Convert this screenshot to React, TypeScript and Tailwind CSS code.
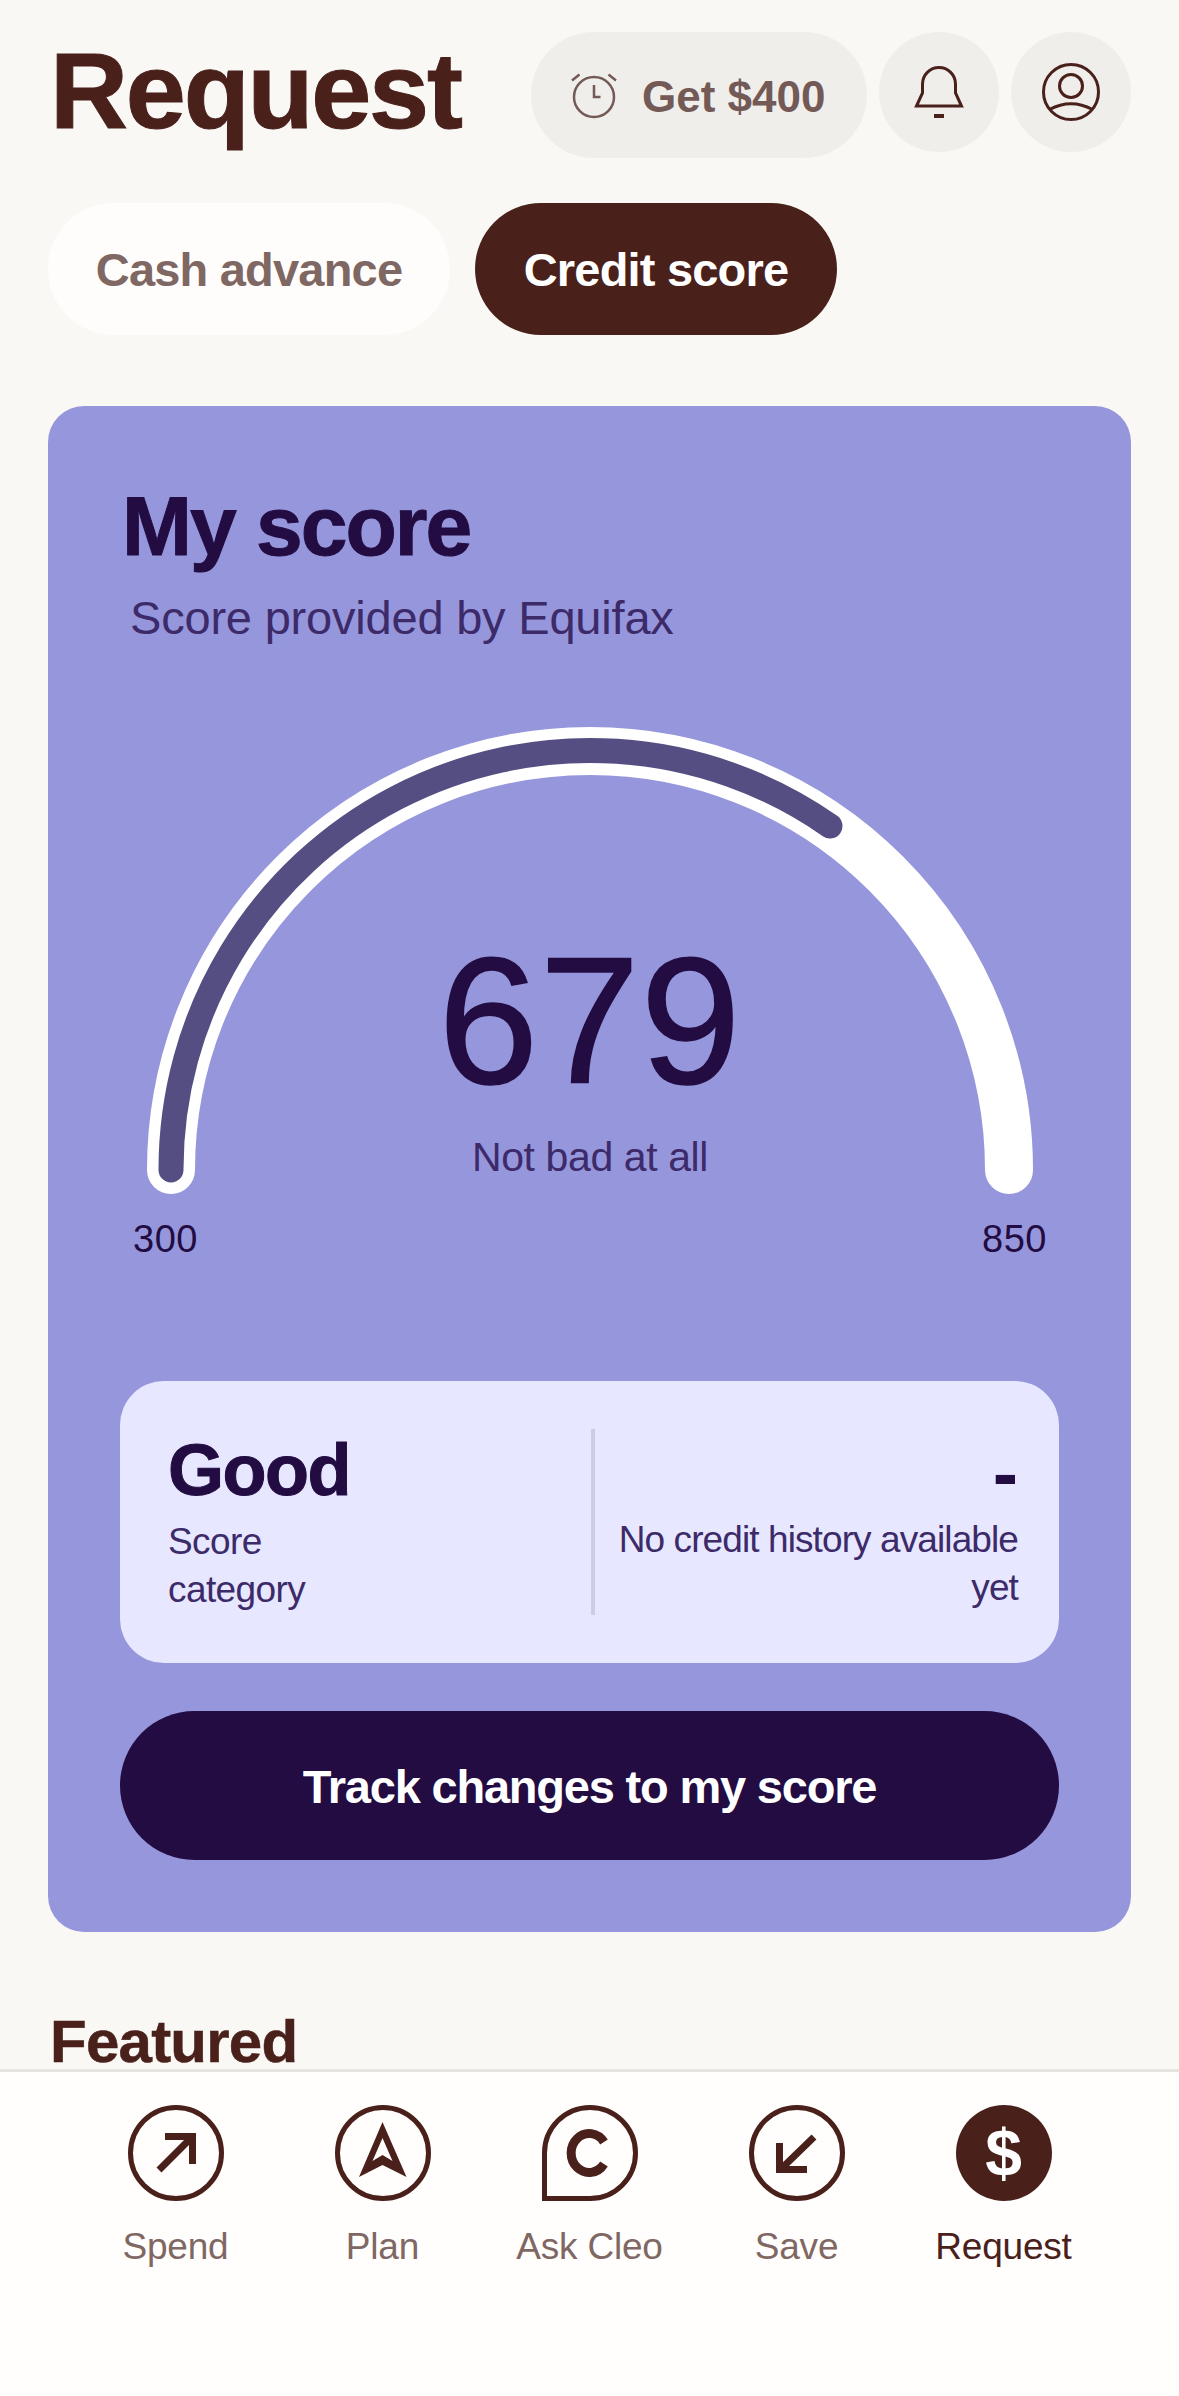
import React from "react";

const font = "font-['Liberation_Sans',Arial,sans-serif]";

function Alarm() {
  return (
    <svg width="46" height="48" viewBox="0 0 46 48" fill="none" stroke="#735A56" strokeWidth="2.5">
      <circle cx="23" cy="26" r="20" />
      <path d="M23 14v12h6.5" />
      <path d="M1 9.5 8.5 3.5M45 9.5 37.5 3.5" />
    </svg>
  );
}

function Bell() {
  return (
    <svg width="50" height="54" viewBox="0 0 50 54" fill="none" stroke="#4A201B" strokeWidth="3">
      <path d="M2.5 41 8.5 28V19A16.5 16.5 0 0 1 41.5 19V28L47.5 41Z" />
      <path d="M20 51h10" strokeWidth="4" />
    </svg>
  );
}

function Person() {
  return (
    <svg width="60" height="60" viewBox="0 0 60 60" fill="none" stroke="#4A201B" strokeWidth="3">
      <circle cx="30" cy="30" r="27.5" />
      <circle cx="30" cy="24" r="11.5" />
      <path d="M8.5 47.5Q30 36 51.5 47.5" />
    </svg>
  );
}

function Ring({ children }: { children: React.ReactNode }) {
  return (
    <svg width="96" height="96" viewBox="0 0 96 96" fill="none">
      <circle cx="48" cy="48" r="45.5" stroke="#4A201B" strokeWidth="5" />
      {children}
    </svg>
  );
}

const tabs: { label: string; active?: boolean; icon: React.ReactNode }[] = [
  {
    label: "Spend",
    icon: (
      <Ring>
        <path d="M31 65 64 32M37 31.5h27.5V59" stroke="#4A201B" strokeWidth="7" />
      </Ring>
    ),
  },
  {
    label: "Plan",
    icon: (
      <Ring>
        <path d="M47.5 17 71.5 72 47.5 60 24 72ZM47.5 33 37.5 56 47.5 50 57.5 56Z" fill="#4A201B" fillRule="evenodd" />
      </Ring>
    ),
  },
  {
    label: "Ask Cleo",
    icon: (
      <svg width="96" height="96" viewBox="0 0 96 96" fill="none">
        <path d="M2.5 93.5V48a45.5 45.5 0 1 1 45.5 45.5H2.5Z" stroke="#4A201B" strokeWidth="5" />
        <path d="M62 37A18 19.5 0 1 0 62 59" stroke="#4A201B" strokeWidth="9" />
      </svg>
    ),
  },
  {
    label: "Save",
    icon: (
      <Ring>
        <path d="M65 32 33 63M30.5 38v26.5H58" stroke="#4A201B" strokeWidth="7" />
      </Ring>
    ),
  },
  {
    label: "Request",
    active: true,
    icon: (
      <div className="flex h-24 w-24 items-center justify-center rounded-full bg-[#4A201B]">
        <span className="text-[66px] leading-none font-bold text-white">$</span>
      </div>
    ),
  },
];

export default function App() {
  return (
    <div className={`${font} flex h-[2396px] w-[1179px] flex-col overflow-hidden bg-[#F9F8F5] text-[#4A201B]`}>
      <main className="min-h-0 flex-1 pl-12 pr-12">
        <header className="flex items-start pt-8">
          <h1 className="ml-0.5 mt-[4px] w-[481px] shrink-0 text-[108px] leading-[110px] font-bold tracking-[-2.2px] [-webkit-text-stroke:1px]">Request</h1>
          <button className="flex h-[126px] w-[336px] items-center justify-start gap-[25px] rounded-full bg-[#EFEEEB] pl-10 text-[44px] font-bold text-[#735A56]">
            <Alarm />
            <span className="mt-[3px]">Get $400</span>
          </button>
          <button className="ml-3 flex h-[120px] w-[120px] items-center justify-center rounded-full bg-[#EFEEEB]">
            <Bell />
          </button>
          <button className="ml-3 flex h-[120px] w-[120px] items-center justify-center rounded-full bg-[#EFEEEB]">
            <Person />
          </button>
        </header>

        <div className="mt-[45px] flex gap-[25px]">
          <button className="flex h-[132px] w-[402px] items-center justify-center rounded-full bg-[#FEFDFB] pt-[3px] text-[47px] font-bold tracking-[-0.8px] text-[#7F6763]">Cash advance</button>
          <button className="flex h-[132px] w-[362px] items-center justify-center rounded-full bg-[#4A201B] pt-[3px] text-[47px] font-bold tracking-[-0.8px] text-white">Credit score</button>
        </div>

        <section className="mt-[71px] flex h-[1526px] flex-col rounded-[36px] bg-[#9696DC] px-[72px] text-[#220C42]">
          <h2 className="ml-0.5 mt-[74px] text-[84px] leading-[92px] font-bold tracking-[-2px] [-webkit-text-stroke:1px]">My score</h2>
          <p className="ml-[10px] mt-[18px] text-[47px] leading-[56px] tracking-[-0.2px] text-[#3C2A69]">Score provided by Equifax</p>

          <div className="relative ml-[27px] mt-[81px] h-[468px] w-[886px]">
            <svg width="886" height="468" viewBox="0 0 886 468" fill="none">
              <path d="M24 443A419 419 0 0 1 862 443" stroke="#FFFFFF" strokeWidth="48" strokeLinecap="round" />
              <path d="M24 443A419 419 0 0 1 683 99" stroke="#544E82" strokeWidth="25" strokeLinecap="round" />
            </svg>
            <div className="absolute inset-x-0 top-[194px] flex flex-col items-center">
              <span className="text-[180px] leading-[200px] tracking-[1px] [-webkit-text-stroke:1.5px]">679</span>
              <span className="mt-[12px] text-[41px] leading-[48px] tracking-[-0.4px] text-[#3C2A69]">Not bad at all</span>
            </div>
          </div>

          <div className="mt-[22px] ml-[11px] flex w-[916px] justify-between text-[38px] leading-[44px] tracking-[0.5px]">
            <span className="ml-[2px]">300</span>
            <span>850</span>
          </div>

          <div className="mt-[120px] flex h-[282px] w-[939px] shrink-0 items-center rounded-[44px] bg-[#E7E7FF] pl-12 pr-[41px]">
            <div className="w-[423px] shrink-0">
              <div className="text-[72px] leading-[80px] font-bold tracking-[-1.5px] [-webkit-text-stroke:1px]">Good</div>
              <div className="mt-[8px] text-[37px] leading-[48px] tracking-[-0.6px] text-[#3C2A69]">
                Score
                <br />
                category
              </div>
            </div>
            <div className="h-[186px] w-1 shrink-0 bg-[#CCCCE6]" />
            <div className="min-w-0 flex-1 text-right">
              <div className="text-[76px] leading-[80px] font-bold">-</div>
              <div className="mt-[3px] whitespace-nowrap text-[37px] leading-[48px] tracking-[-0.9px] text-[#3C2A69]">
                No credit history available
                <br />
                yet
              </div>
            </div>
          </div>

          <button className="mt-12 flex h-[149px] w-[939px] shrink-0 items-center justify-center rounded-full bg-[#220C42] pt-1 text-[47px] font-bold tracking-[-1.2px] text-white">
            Track changes to my score
          </button>
        </section>

        <h3 className="ml-0.5 mt-[86px] text-[60px] leading-[48px] font-bold tracking-[-0.75px] [-webkit-text-stroke:0.5px]">Featured</h3>
      </main>

      <nav className="h-[327px] shrink-0 border-t-[3px] border-[#E5E4E1] bg-[#FFFEFC]">
        <div className="flex justify-center pt-[33px]">
          {tabs.map((t) => (
            <div key={t.label} className="flex w-[207px] flex-col items-center">
              {t.icon}
              <span className={`mt-[24px] text-[37px] leading-[44px] tracking-[-0.2px] ${t.active ? "text-[#4A201B]" : "text-[#7F6763]"}`}>{t.label}</span>
            </div>
          ))}
        </div>
      </nav>
    </div>
  );
}
